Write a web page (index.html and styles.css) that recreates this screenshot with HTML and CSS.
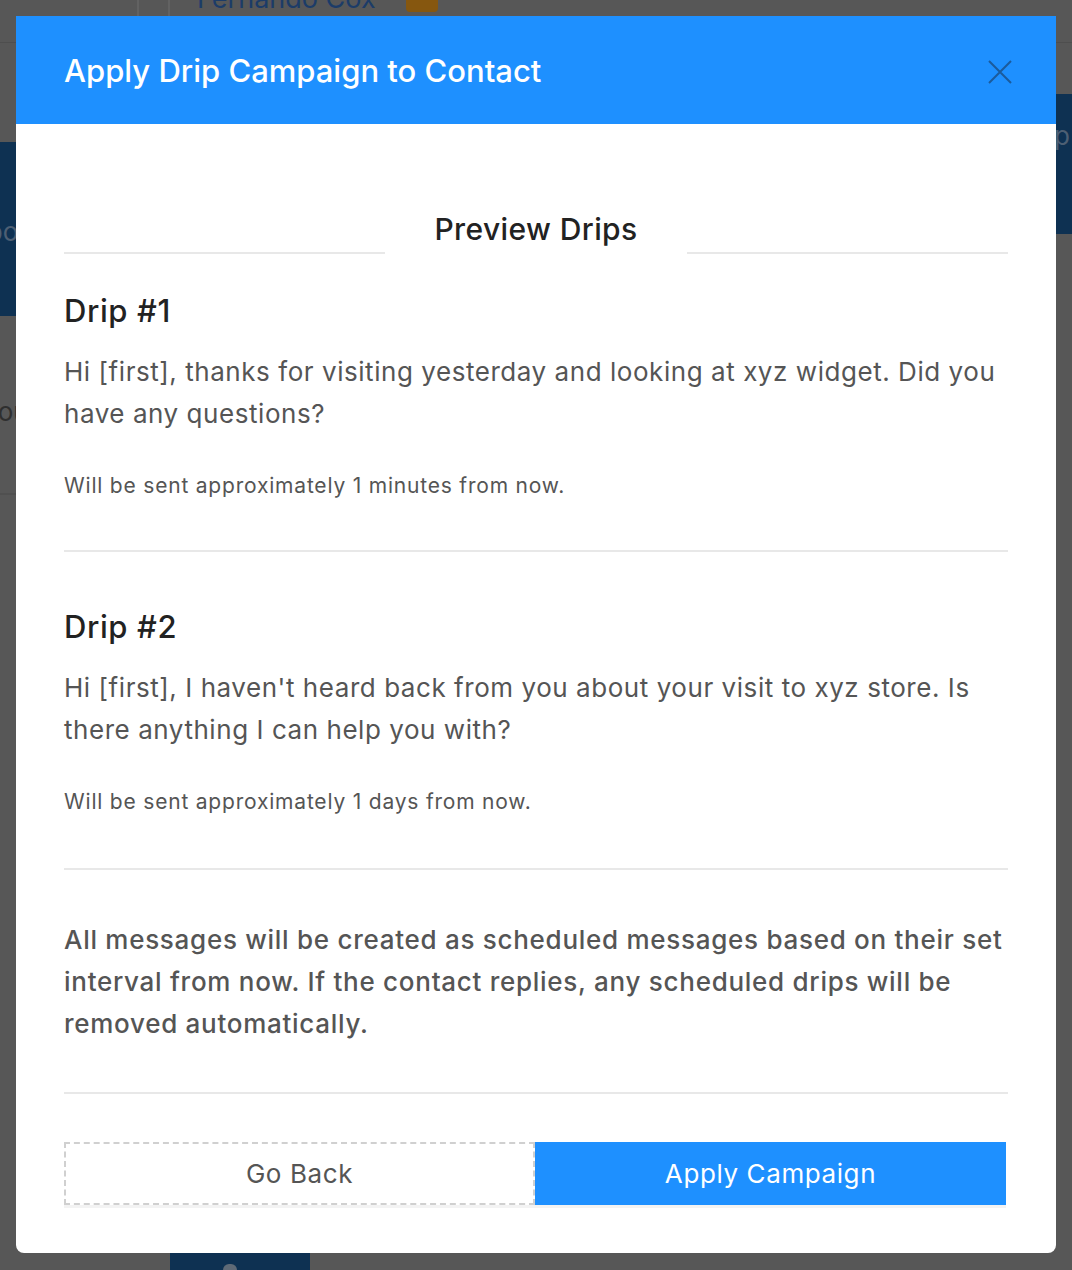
FILE: index.html
```html
<!DOCTYPE html>
<html lang="en">
<head>
  <meta charset="UTF-8">
  <meta name="viewport" content="width=device-width, initial-scale=1.0">
  <title>Apply Drip Campaign to Contact</title>
  <link rel="stylesheet" href="styles.css">
</head>
<body>

<div class="app">
  <div class="topbar">
    <div class="topbar-cell wide"></div>
    <div class="topbar-cell narrow"></div>
    <div class="contact">
      <span class="contact-name">Fernando Cox</span>
      <span class="contact-badge"></span>
    </div>
  </div>
  <div class="workspace">
    <div class="side-left">
      <div class="side-card">Appointments</div>
      <div class="side-text">Your</div>
    </div>
    <div class="side-right">
      <div class="side-card right">Drip</div>
    </div>
  </div>
  <div class="bottombar">
    <div class="bottom-btn"><span class="bottom-dot"></span></div>
  </div>
</div>

<div class="modal">
  <header class="modal-header">
    <h1>Apply Drip Campaign to Contact</h1>
    <button class="modal-close" aria-label="Close">
      <svg width="24" height="24" viewBox="0 0 24 24">
        <path d="M1 1 L23 23 M23 1 L1 23" stroke="#1b5b9c" stroke-width="2" fill="none"/>
      </svg>
    </button>
  </header>

  <div class="modal-body">
    <div class="section-title">
      <span class="rule"></span>
      <h2>Preview Drips</h2>
      <span class="rule"></span>
    </div>

    <div class="drip">
      <h3>Drip #1</h3>
      <p class="drip-text">Hi [first], thanks for visiting yesterday and looking at xyz widget. Did you have any questions?</p>
      <p class="drip-when">Will be sent approximately 1 minutes from now.</p>
    </div>

    <div class="drip">
      <h3>Drip #2</h3>
      <p class="drip-text">Hi [first], I haven't heard back from you about your visit to xyz store. Is there anything I can help you with?</p>
      <p class="drip-when">Will be sent approximately 1 days from now.</p>
    </div>

    <div class="note">
      <p>All messages will be created as scheduled messages based on their set interval from now. If the contact replies, any scheduled drips will be removed automatically.</p>
    </div>

    <div class="actions">
      <button class="btn btn-back">Go Back</button>
      <button class="btn btn-apply">Apply Campaign</button>
    </div>
  </div>
</div>

</body>
</html>
```

FILE: styles.css
```css
body {
  margin: 0;
  padding: 0;
  font-family: 'Inter', 'Roboto', sans-serif;
  background: #575757;
  overflow: hidden;
}

/* dimmed page behind the modal */
.app {
  display: flex;
  flex-direction: column;
  min-height: 1270px;
  background: #575757;
}
.topbar {
  display: flex;
  height: 42px;
  border-bottom: 1px solid #4e4e4e;
  overflow: hidden;
}
.topbar-cell {
  border-right: 2px solid #626262;
}
.topbar-cell.wide {
  width: 137px;
}
.topbar-cell.narrow {
  width: 29px;
}
.contact {
  display: flex;
  align-items: flex-start;
  gap: 30px;
  padding-left: 27px;
}
.contact-name {
  font-size: 27px;
  line-height: 30px;
  margin-top: -16px;
  color: #1c3c68;
}
.contact-badge {
  width: 32px;
  height: 13px;
  margin-top: -1px;
  background: #86570f;
  border-radius: 0 0 4px 4px;
}
.workspace {
  flex: 1;
  display: flex;
  justify-content: space-between;
}
.side-left {
  width: 300px;
  display: flex;
  flex-direction: column;
}
.side-card {
  background: #0e3152;
  color: #4d5f73;
  font-size: 26px;
  margin-top: 99px;
  height: 174px;
  line-height: 180px;
  text-indent: -47px;
  overflow: hidden;
  white-space: nowrap;
}
.side-text {
  color: #2f2f2f;
  font-size: 26px;
  margin-top: 80px;
  text-indent: -18px;
  padding-bottom: 66px;
  border-bottom: 2px solid #505050;
}
.side-right {
  width: 300px;
}
.side-card.right {
  margin-top: 51px;
  height: 140px;
  line-height: 84px;
  text-indent: 0;
  text-align: right;
  padding-right: 2px;
}
.bottombar {
  height: 17px;
  padding-left: 170px;
}
.bottom-btn {
  width: 140px;
  height: 17px;
  background: #0e3152;
  display: flex;
  align-items: flex-end;
  padding-left: 53px;
  box-sizing: border-box;
}
.bottom-dot {
  width: 14px;
  height: 6px;
  border-radius: 7px 7px 0 0;
  background: #5f6a76;
}

/* modal */
.modal {
  position: absolute;
  top: 16px;
  left: 16px;
  width: 1040px;
  background: #fff;
  border-radius: 0 0 8px 8px;
}
.modal-header {
  display: flex;
  align-items: center;
  justify-content: space-between;
  height: 108px;
  padding: 0 44px 0 48px;
  background: #1e90ff;
}
.modal-header h1 {
  margin: 0;
  color: #fff;
  font-size: 31px;
  font-weight: 500;
}
.modal-close {
  background: none;
  border: none;
  padding: 0;
  margin-top: 4px;
  display: flex;
  cursor: pointer;
}
.modal-body {
  padding: 87px 48px 48px;
}
.section-title {
  display: flex;
  align-items: flex-end;
}
.section-title .rule {
  flex: 1;
  height: 2px;
  background: #e8e8e8;
}
.section-title h2 {
  margin: 0;
  padding: 0 49px 7px;
  font-size: 30px;
  line-height: 36px;
  font-weight: 500;
  letter-spacing: 0.4px;
  color: #222;
}
.drip {
  padding: 37px 0 50px;
  border-bottom: 2px solid #e8e8e8;
}
.drip + .drip {
  padding: 55px 0 52px;
}
.drip h3 {
  margin: 0 0 20px;
  font-size: 31px;
  line-height: 40px;
  font-weight: 500;
  letter-spacing: 0.6px;
  color: #222;
}
.drip-text {
  margin: 0 0 37px;
  font-size: 26px;
  line-height: 42px;
  letter-spacing: 0.55px;
  color: #555;
}
.drip-when {
  margin: 0;
  font-size: 21px;
  line-height: 28px;
  letter-spacing: 0.8px;
  color: #555;
}
.note {
  padding: 49px 0 47px;
  border-bottom: 2px solid #e8e8e8;
}
.note p {
  margin: 0;
  font-size: 26px;
  line-height: 42px;
  font-weight: 500;
  letter-spacing: 0.72px;
  color: #555;
}
.actions {
  display: grid;
  grid-template-columns: 1fr 1fr;
  margin-top: 48px;
  margin-right: 2px;
}
.btn {
  height: 63px;
  font-family: inherit;
  font-size: 26px;
  letter-spacing: 0.6px;
  cursor: pointer;
  box-shadow: 0 3px 0 #f3f3f3;
}
.btn-back {
  background: #fff;
  color: #555;
  border: 2px dashed #d0d0d0;
}
.btn-apply {
  background: #1e90ff;
  color: #fff;
  border: none;
}
```
